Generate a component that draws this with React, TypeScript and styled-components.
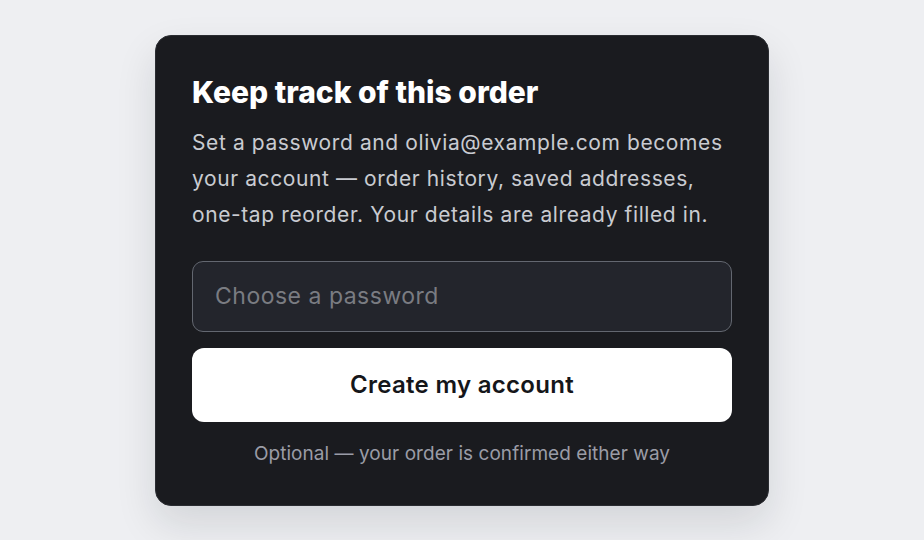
import React from "react";
import styled, { createGlobalStyle } from "styled-components";

const Global = createGlobalStyle`
  html, body { margin: 0; padding: 0; }
  body {
    background: #eeeff2;
    font-family: Inter, "Noto Sans", sans-serif;
    -webkit-font-smoothing: antialiased;
  }
  * { box-sizing: border-box; }
`;

const Page = styled.div`
  min-height: 100vh;
  display: flex;
  align-items: center;
  justify-content: center;
`;

const Card = styled.section`
  width: 614px;
  background: #1a1b1f;
  border: 1px solid #2a2c31;
  border-radius: 16px;
  padding: 36px 36px 37px;
  box-shadow: 0 18px 40px rgba(20, 22, 30, 0.12);
  display: flex;
  flex-direction: column;
`;

const Title = styled.h2`
  margin: 0;
  color: #ffffff;
  font-size: 30px;
  font-weight: 800;
  letter-spacing: 0px;
  line-height: 40px;
`;

const Body = styled.p`
  margin: 13px 0 0;
  color: #c9cbd1;
  font-size: 21px;
  line-height: 36px;
  letter-spacing: 0.6px;
`;

const Input = styled.input`
  margin-top: 28px;
  height: 71px;
  width: 100%;
  border-radius: 11px;
  border: 1.5px solid #636770;
  background: #23252c;
  padding: 0 22px;
  font-family: inherit;
  font-size: 23px;
  letter-spacing: 0.5px;
  color: #ffffff;
  outline: none;
  &::placeholder { color: #7a7c82; }
`;

const Button = styled.button`
  margin-top: 16px;
  height: 74px;
  width: 100%;
  border: none;
  border-radius: 12px;
  background: #ffffff;
  color: #15161a;
  font-family: inherit;
  font-size: 24px;
  font-weight: 600;
  letter-spacing: 0.3px;
  cursor: pointer;
`;

const Note = styled.p`
  margin: 18px 0 0;
  text-align: center;
  color: #9a9ca6;
  font-size: 19px;
  line-height: 28px;
  letter-spacing: 0.05px;
`;

export default function App() {
  return (
    <>
      <Global />
      <Page>
        <Card>
          <Title>Keep track of this order</Title>
          <Body>
            Set a password and olivia@example.com becomes your account — order
            history, saved addresses, one-tap reorder. Your details are already
            filled in.
          </Body>
          <Input type="password" placeholder="Choose a password" />
          <Button>Create my account</Button>
          <Note>Optional — your order is confirmed either way</Note>
        </Card>
      </Page>
    </>
  );
}
